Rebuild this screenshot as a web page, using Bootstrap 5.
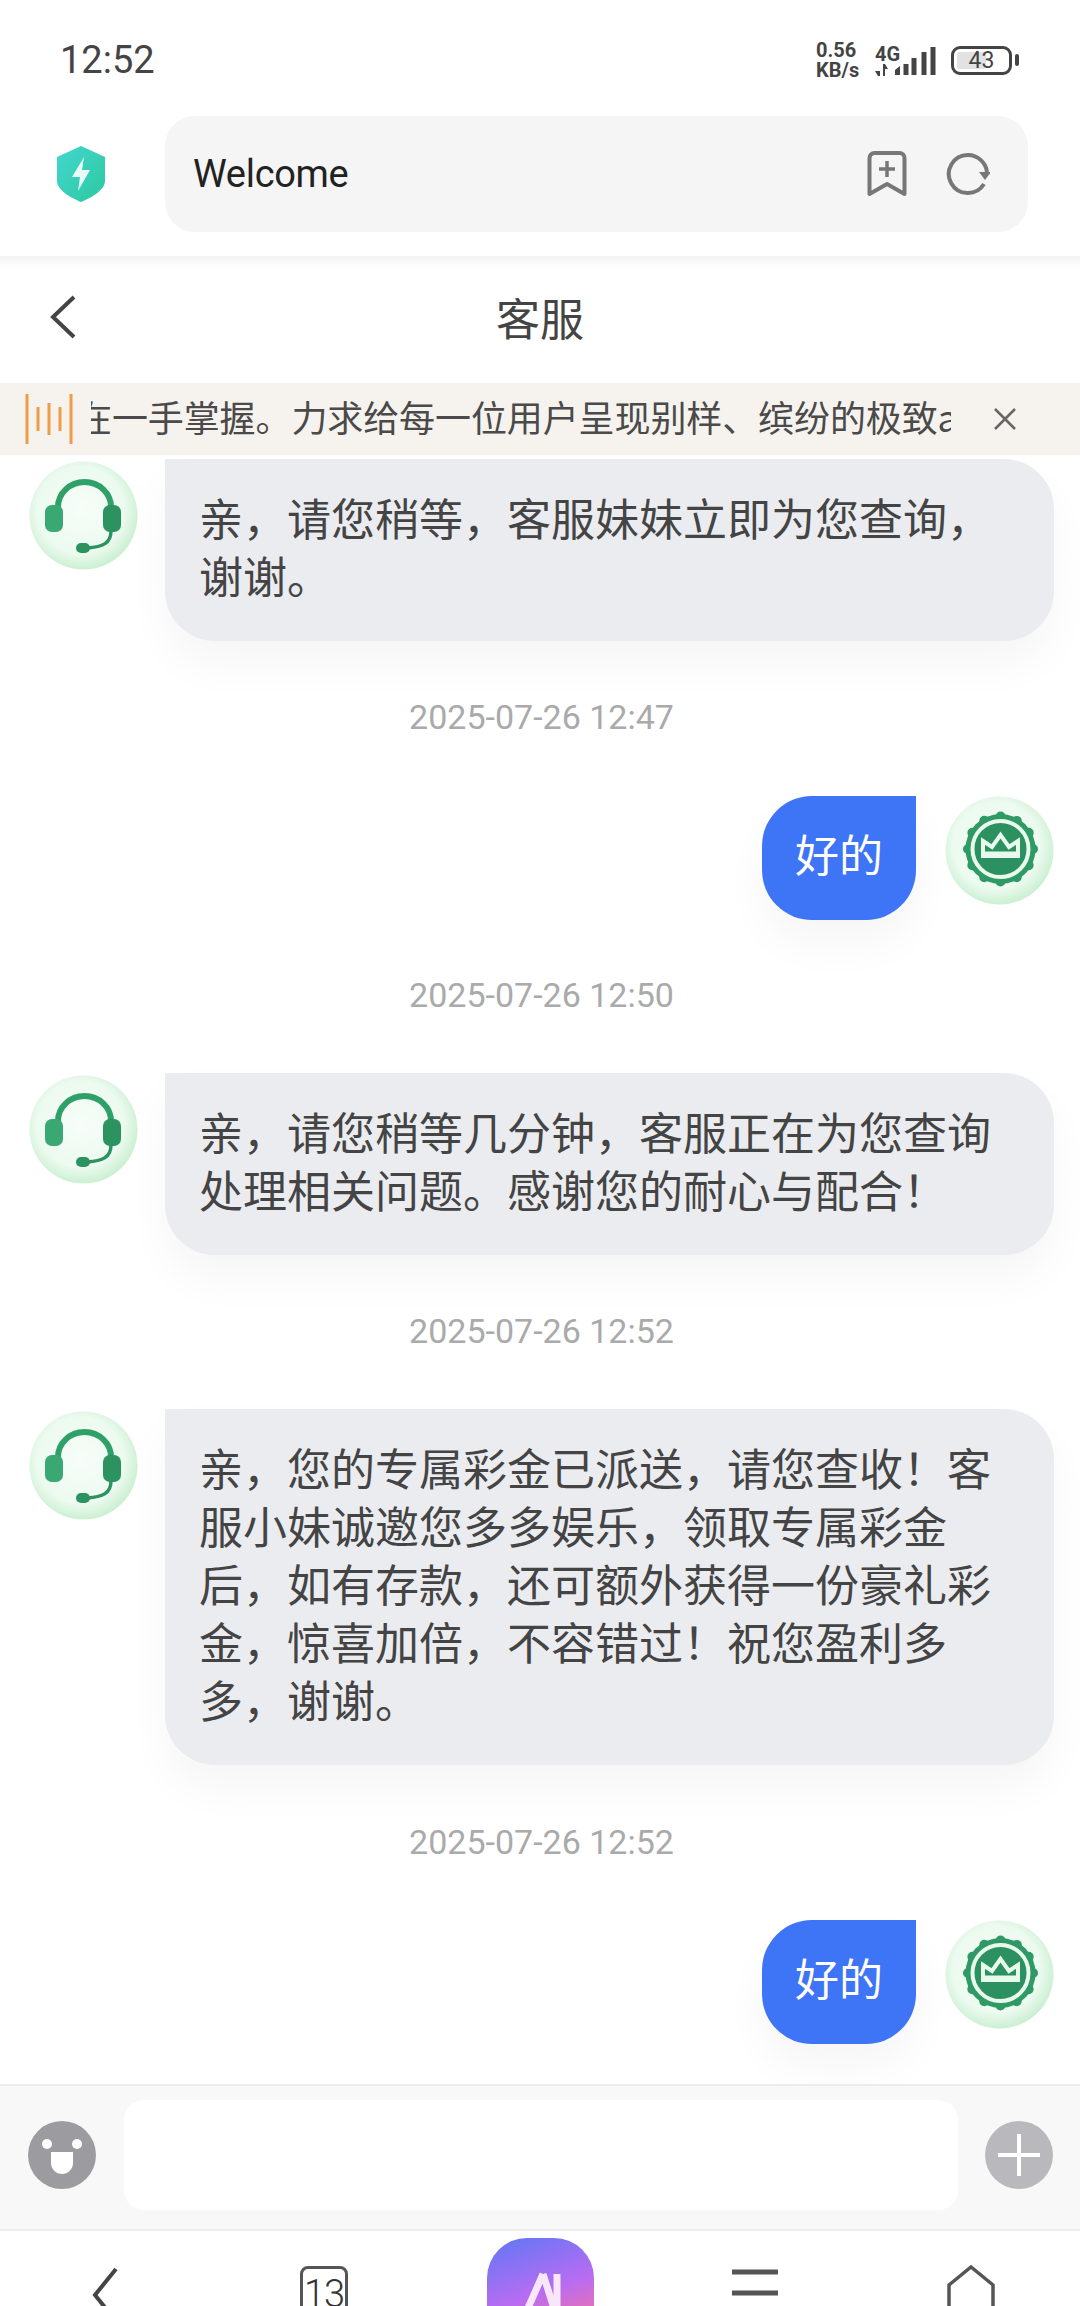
<!DOCTYPE html>
<html lang="zh-CN">
<head>
    <meta charset="UTF-8">
    <meta name="viewport" content="width=device-width, initial-scale=1.0">
    <title>客服</title>
    <link href="https://cdn.jsdelivr.net/npm/bootstrap@5.3.0/dist/css/bootstrap.min.css" rel="stylesheet">
    <style>
        html, body { margin: 0; background: #fff; }
        body { width: 1080px; height: 2306px; overflow: hidden; font-family: "Noto Sans CJK SC", "Liberation Sans", sans-serif; color: #444; }
        .phone-status { height: 116px; padding: 4px 61px 0 60px; }
        .clock { font-family: Roboto, sans-serif; font-size: 38px; color: #444; line-height: 1; }
        .net-speed { font-family: Roboto, sans-serif; font-weight: 700; font-size: 20px; line-height: 20px; color: #444; width: 59px; }
        .net-col { width: 27px; flex: none; }
        .net-type { font-family: Roboto, sans-serif; font-weight: 700; font-size: 20px; line-height: 20px; color: #444; }
        .signal-bars { margin-left: -7px; }
        .batt { width: 61px; height: 29px; border: 3px solid #444; border-radius: 9px; padding: 3px; margin-left: 15px; }
        .batt-fill { width: 60%; background: #e2e2e2; height: 100%; border-radius: 2px; }
        .batt-num { font-family: Roboto, sans-serif; font-size: 23px; line-height: 1; color: #444; position: absolute; left: 0; right: 0; top: 0; text-align: center; }
        .batt-tip { width: 4px; height: 12px; background: #444; border-radius: 2px; margin-left: 3px; }
        .browser-bar { height: 140px; padding: 0 52px 24px 57px; }
        .shield-wrap { width: 108px; flex: none; }
        .url-pill { width: 863px; height: 116px; background: #f5f5f5; border-radius: 30px; padding: 0 38px 0 28px; }
        .url-text { font-family: Roboto, sans-serif; font-size: 38px; color: #222; font-weight: 400; letter-spacing: -.3px; }
        .url-tools { gap: 39px; }
        .title-row { height: 127px; box-shadow: inset 0 14px 12px -10px #f0f0f0; padding-left: 50px; padding-bottom: 6px; }
        .title-back { width: 26px; flex: none; }
        .title-text { font-size: 44px; color: #444; line-height: 1; position: absolute; left: 0; right: 0; text-align: center; }
        .notice-bar { height: 72px; background: #f6f2ee; padding-left: 25px; padding-bottom: 5px; }
        .notice-icon { margin-top: 5px; flex: none; }
        .notice-clip { width: 860px; margin-left: 18px; overflow: hidden; white-space: nowrap; font-size: 36px; line-height: 1.1; color: #4a4a4a; }
        .notice-text { display: inline-block; margin-left: -15px; letter-spacing: -.1px; }
        .notice-x { margin-left: 42px; margin-top: 5px; }
        .chat-area { height: 1629px; overflow: hidden; padding: 4px 26px 0 29px; }
        .msg-row { gap: 27px; }
        .msg-out { gap: 29px; }
        .agent-avatar { width: 109px; height: 109px; flex: none; margin-top: 2px; }
        .msg-out .agent-avatar { margin-top: 0; }
        .bubble-in { width: 889px; background: #ebecf0; border-radius: 0 50px 50px 50px; padding: 29px 36px 37px 34px; font-size: 44px; line-height: 58px; color: #444; box-shadow: 0 24px 44px rgba(0,0,0,.04); }
        .bubble-out { width: 154px; height: 124px; padding-bottom: 11px; background: #3e74f6; border-radius: 50px 0 50px 50px; color: #fff; font-size: 44px; box-shadow: 0 24px 44px rgba(0,0,0,.04); }
        .msg-time { font-family: Roboto, sans-serif; font-size: 34px; line-height: 40px; color: #aaa; text-align: center; }
        .time-a { margin-top: 56px; margin-bottom: 59px; }
        .time-b { margin-top: 55px; margin-bottom: 58px; }
        .time-c { margin-top: 56px; margin-bottom: 58px; }
        .time-d { margin-top: 57px; margin-bottom: 58px; }
        .input-bar { height: 147px; background: #f8f8f8; border-top: 2px solid #ececec; border-bottom: 2px solid #ececec; padding: 0 27px 5px 28px; }
        .input-box { width: 834px; height: 110px; background: #fff; border-radius: 20px; }
        .round-btn { width: 68px; height: 68px; flex: none; }
        .browser-nav { height: 76px; overflow: hidden; }
        .nav-slot { position: relative; flex: none; }
        .nav-back { margin-left: 92px; margin-top: 36px; }
        .nav-tabs-slot { margin-left: 182px; }
        .nav-app { margin-left: 139px; }
        .nav-menu { margin-left: 138px; margin-top: 38px; }
        .nav-home { margin-left: 167px; margin-top: 34px; }
        .tab-count { width: 48px; height: 60px; border: 3px solid #555; border-radius: 8px; font-family: Roboto, sans-serif; font-size: 38px; font-weight: 300; line-height: 50px; color: #333; text-align: center; margin-top: 35px; letter-spacing: -1px; }
        .app-tile { width: 107px; height: 110px; margin-top: 7px; border-radius: 40px; background: linear-gradient(160deg, #5d78f5 0%, #b86cf2 50%, #ff7395 90%); }
    </style>
</head>
<body>
    <svg width="0" height="0" class="position-absolute">
        <defs>
            <radialGradient id="bubbleGlow" cx="47%" cy="45%" r="56%">
                <stop offset="0" stop-color="#f8fdf9"/>
                <stop offset=".72" stop-color="#ecfaef"/>
                <stop offset="1" stop-color="#c9efd0"/>
            </radialGradient>
            <linearGradient id="shieldFill" x1="0" y1="0" x2="1" y2="1">
                <stop offset="0" stop-color="#43d6cf"/>
                <stop offset="1" stop-color="#2cc9a0"/>
            </linearGradient>
            <symbol id="agentFace" viewBox="0 0 109 109">
                <circle cx="54.5" cy="54.5" r="54" fill="url(#bubbleGlow)"/>
                <path d="M29 46A26.500 25 0 0 1 82 46" fill="none" stroke="#30a069" stroke-width="6"/>
                <rect x="16" y="44" width="18" height="27" rx="7" fill="#3aa873"/>
                <rect x="74" y="44" width="18" height="27" rx="7" fill="#2b9260"/>
                <path d="M82 70c0 12-8 16-24 17" fill="none" stroke="#2b9260" stroke-width="3.500"/>
                <rect x="47" y="82" width="14" height="10" rx="5" fill="#2b9260"/>
            </symbol>
            <symbol id="memberFace" viewBox="0 0 109 109">
                <circle cx="54.5" cy="54.5" r="54" fill="url(#bubbleGlow)"/>
                <circle cx="55.500" cy="53" r="35" fill="#2f9a66"/>
                <circle cx="55.500" cy="53" r="32.500" fill="none" stroke="#2f9a66" stroke-width="10" stroke-linecap="round" stroke-dasharray="0 17"/>
                <circle cx="55.500" cy="53" r="28" fill="#2c9160" stroke="#e9f9ec" stroke-width="4"/>
                <path d="M38 45l9 6 8.500-12 8.500 12 9-6v15H38z" fill="none" stroke="#e9f9ec" stroke-width="4"/>
                <path d="M38 57h34" stroke="#e9f9ec" stroke-width="3"/>
            </symbol>
        </defs>
    </svg>

    <div class="phone-status d-flex align-items-center justify-content-between">
        <div class="clock">12:52</div>
        <div class="d-flex align-items-center">
            <div class="net-speed">0.56<br>KB/s</div>
            <div class="net-col">
                <div class="net-type">4G</div>
                <svg width="22" height="12" viewBox="0 0 22 12" class="d-block"><path d="M5 0v12H3L0 7h5zM8 0h2l3 5h-3v7H8z" fill="#444"/></svg>
            </div>
            <svg width="41" height="32" viewBox="0 0 41 32" class="d-block signal-bars"><path d="M0 31V26l5-4v9z" fill="#444"/><path d="M11 31V20M19 31V14M29 31V8M38 31V3" stroke="#444" stroke-width="5"/></svg>
            <div class="batt position-relative">
                <div class="batt-fill"></div>
                <div class="batt-num">43</div>
            </div>
            <div class="batt-tip"></div>
        </div>
    </div>

    <div class="browser-bar d-flex align-items-center">
        <div class="shield-wrap">
            <svg width="48" height="56" viewBox="0 0 48 56" class="d-block"><path d="M24 0l24 11v24c0 9-14 17-24 21C14 52 0 44 0 35V11z" fill="url(#shieldFill)"/><path d="M27 11L15 31h8l-2 14 12-21h-8z" fill="#eafbf6"/></svg>
        </div>
        <div class="url-pill d-flex align-items-center justify-content-between">
            <div class="url-text">Welcome</div>
            <div class="d-flex align-items-center url-tools">
                <svg width="40" height="46" viewBox="0 0 40 46"><path d="M2.500 7a5 5 0 0 1 5-5h25a5 5 0 0 1 5 5v36L20 33 2.500 43z" fill="none" stroke="#777" stroke-width="4" stroke-linejoin="round"/><path d="M20 10v16M12 18h16" stroke="#777" stroke-width="3.500"/></svg>
                <svg width="44" height="44" viewBox="0 0 44 44"><path d="M38 32A19 19 0 1 1 22 3c10 0 18 8 19 17" fill="none" stroke="#777" stroke-width="4"/><path d="M33 20h12l-6 8z" fill="#777"/></svg>
            </div>
        </div>
    </div>

    <div class="title-row d-flex align-items-center position-relative">
        <div class="title-back">
            <svg width="26" height="44" viewBox="0 0 26 44" class="d-block"><path d="M24 2L3 22l21 20" fill="none" stroke="#444" stroke-width="4"/></svg>
        </div>
        <div class="title-text">客服</div>
    </div>

    <div class="notice-bar d-flex align-items-center">
        <svg width="48" height="50" viewBox="0 0 48 50" class="notice-icon d-block"><path d="M2 0v50M46 0v50M24 9v32M13 13v24M35 13v24" stroke="#ef9c46" stroke-width="3"/></svg>
        <div class="notice-clip"><span class="notice-text">在一手掌握。力求给每一位用户呈现别样、缤纷的极致a</span></div>
        <svg width="24" height="24" viewBox="0 0 24 24" class="notice-x"><path d="M2 2l20 20M22 2L2 22" stroke="#666" stroke-width="2.500"/></svg>
    </div>

    <div class="chat-area">
        <div class="d-flex msg-row">
            <svg class="agent-avatar"><use href="#agentFace"/></svg>
            <div class="bubble-in">亲，请您稍等，客服妹妹立即为您查询，谢谢。</div>
        </div>
        <div class="msg-time time-a">2025-07-26 12:47</div>
        <div class="d-flex msg-out justify-content-end">
            <div class="bubble-out d-flex align-items-center justify-content-center">好的</div>
            <svg class="agent-avatar"><use href="#memberFace"/></svg>
        </div>
        <div class="msg-time time-b">2025-07-26 12:50</div>
        <div class="d-flex msg-row">
            <svg class="agent-avatar"><use href="#agentFace"/></svg>
            <div class="bubble-in">亲，请您稍等几分钟，客服正在为您查询处理相关问题。感谢您的耐心与配合！</div>
        </div>
        <div class="msg-time time-c">2025-07-26 12:52</div>
        <div class="d-flex msg-row">
            <svg class="agent-avatar"><use href="#agentFace"/></svg>
            <div class="bubble-in">亲，您的专属彩金已派送，请您查收！客服小妹诚邀您多多娱乐，领取专属彩金后，如有存款，还可额外获得一份豪礼彩金，惊喜加倍，不容错过！祝您盈利多多，谢谢。</div>
        </div>
        <div class="msg-time time-d">2025-07-26 12:52</div>
        <div class="d-flex msg-out justify-content-end">
            <div class="bubble-out d-flex align-items-center justify-content-center">好的</div>
            <svg class="agent-avatar"><use href="#memberFace"/></svg>
        </div>
    </div>

    <div class="input-bar d-flex align-items-center justify-content-between">
        <svg class="round-btn" viewBox="0 0 68 68"><circle cx="34" cy="34" r="34" fill="#9c9ca0"/><circle cx="19" cy="23" r="5" fill="#fff"/><circle cx="49" cy="23" r="5" fill="#fff"/><path d="M23 31h22v11a11 11 0 0 1-22 0z" fill="#fff"/></svg>
        <div class="input-box"></div>
        <svg class="round-btn" viewBox="0 0 68 68"><circle cx="34" cy="34" r="34" fill="#b9b9bd"/><path d="M34 13v42M13 34h42" stroke="#fff" stroke-width="4"/></svg>
    </div>

    <div class="browser-nav d-flex align-items-start">
        <div class="nav-slot nav-back">
            <svg width="26" height="50" viewBox="0 0 26 50" class="d-block"><path d="M24 2L3 28l21 26" fill="none" stroke="#444" stroke-width="4"/></svg>
        </div>
        <div class="nav-slot nav-tabs-slot"><div class="tab-count">13</div></div>
        <div class="nav-slot nav-app"><div class="app-tile d-flex justify-content-center pt-4">
            <svg width="60" height="70" viewBox="0 0 60 70"><path d="M10 62L32 12M46 12v50M32 12l16 50" fill="none" stroke="#f8e6fa" stroke-width="7"/></svg>
        </div></div>
        <div class="nav-slot nav-menu">
            <svg width="48" height="30" viewBox="0 0 48 30" class="d-block"><path d="M0 3h46M0 24h46" stroke="#555" stroke-width="5"/></svg>
        </div>
        <div class="nav-slot nav-home">
            <svg width="48" height="50" viewBox="0 0 48 50" class="d-block"><path d="M2 50V20L24 2l22 18v30" fill="none" stroke="#555" stroke-width="3.500"/></svg>
        </div>
    </div>

    <script src="https://cdn.jsdelivr.net/npm/bootstrap@5.3.0/dist/js/bootstrap.bundle.min.js"></script>
</body>
</html>
